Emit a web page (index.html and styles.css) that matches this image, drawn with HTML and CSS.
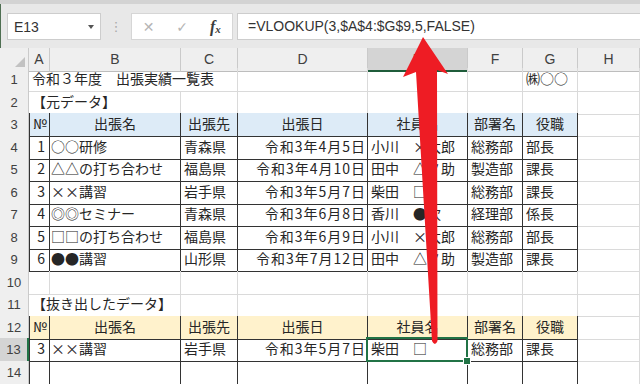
FILE: index.html
```html
<!DOCTYPE html>
<html lang="ja">
<head>
<meta charset="utf-8">
<link rel="stylesheet" href="styles.css">
</head>
<body>
<div class="app">
  <div class="top">
    <div class="namebox"><span class="nb-text">E13</span><span class="caret"></span></div>
    <div class="grip">⋮</div>
    <div class="btns">
      <span class="btn cancel">✕</span>
      <span class="btn enter">✓</span>
      <span class="btn fx"><i>f</i><i class="sub">x</i></span>
    </div>
    <div class="formula">=VLOOKUP(3,$A$4:$G$9,5,FALSE)</div>
  </div>

  <div class="sheet">
    <div class="row colhdr">
      <div class="corner"><svg width="10" height="10" viewBox="0 0 10 10"><polygon points="10,0 10,10 0,10" fill="#c2c2c2"/></svg></div>
      <div class="ch">A</div><div class="ch">B</div><div class="ch">C</div><div class="ch">D</div>
      <div class="ch selc">E</div><div class="ch">F</div><div class="ch">G</div><div class="ch">H</div>
    </div>

    <div class="row">
      <div class="rh">1</div>
      <div class="c span3">令和３年度　出張実績一覧表</div>
      <div class="c"></div><div class="c"></div><div class="c"></div>
      <div class="c">㈱○○</div><div class="c"></div>
    </div>

    <div class="row">
      <div class="rh">2</div>
      <div class="c span2 bb">【元データ】</div>
      <div class="c bb"></div><div class="c bb"></div><div class="c bb"></div><div class="c bb"></div><div class="c bb"></div>
      <div class="c"></div>
    </div>

    <div class="row">
      <div class="rh">3</div>
      <div class="c t a hb ctr">№</div>
      <div class="c t hb ctr">出張名</div>
      <div class="c t hb ctr">出張先</div>
      <div class="c t hb ctr">出張日</div>
      <div class="c t hb ctr">社員名</div>
      <div class="c t hb ctr">部署名</div>
      <div class="c t hb ctr">役職</div>
      <div class="c"></div>
    </div>

    <div class="row">
      <div class="rh">4</div>
      <div class="c t a num">1</div>
      <div class="c t b">○○研修</div>
      <div class="c t">青森県</div>
      <div class="c t date">令和3年4月5日</div>
      <div class="c t">小川　×太郎</div>
      <div class="c t">総務部</div>
      <div class="c t">部長</div>
      <div class="c"></div>
    </div>

    <div class="row">
      <div class="rh">5</div>
      <div class="c t a num">2</div>
      <div class="c t b">△△の打ち合わせ</div>
      <div class="c t">福島県</div>
      <div class="c t date">令和3年4月10日</div>
      <div class="c t">田中　△ノ助</div>
      <div class="c t">製造部</div>
      <div class="c t">課長</div>
      <div class="c"></div>
    </div>

    <div class="row">
      <div class="rh">6</div>
      <div class="c t a num">3</div>
      <div class="c t b">××講習</div>
      <div class="c t">岩手県</div>
      <div class="c t date">令和3年5月7日</div>
      <div class="c t">柴田　□</div>
      <div class="c t">総務部</div>
      <div class="c t">課長</div>
      <div class="c"></div>
    </div>

    <div class="row">
      <div class="rh">7</div>
      <div class="c t a num">4</div>
      <div class="c t b">◎◎セミナー</div>
      <div class="c t">青森県</div>
      <div class="c t date">令和3年6月8日</div>
      <div class="c t">香川　●次</div>
      <div class="c t">経理部</div>
      <div class="c t">係長</div>
      <div class="c"></div>
    </div>

    <div class="row">
      <div class="rh">8</div>
      <div class="c t a num">5</div>
      <div class="c t b">□□の打ち合わせ</div>
      <div class="c t">福島県</div>
      <div class="c t date">令和3年6月9日</div>
      <div class="c t">小川　×太郎</div>
      <div class="c t">総務部</div>
      <div class="c t">部長</div>
      <div class="c"></div>
    </div>

    <div class="row">
      <div class="rh">9</div>
      <div class="c t a num">6</div>
      <div class="c t b">●●講習</div>
      <div class="c t">山形県</div>
      <div class="c t date">令和3年7月12日</div>
      <div class="c t">田中　△ノ助</div>
      <div class="c t">製造部</div>
      <div class="c t">課長</div>
      <div class="c"></div>
    </div>

    <div class="row">
      <div class="rh">10</div>
      <div class="c"></div><div class="c"></div><div class="c"></div><div class="c"></div>
      <div class="c"></div><div class="c"></div><div class="c"></div><div class="c"></div>
    </div>

    <div class="row">
      <div class="rh">11</div>
      <div class="c span2 bb">【抜き出したデータ】</div>
      <div class="c bb"></div><div class="c bb"></div><div class="c bb"></div><div class="c bb"></div><div class="c bb"></div>
      <div class="c"></div>
    </div>

    <div class="row">
      <div class="rh">12</div>
      <div class="c t a hy ctr">№</div>
      <div class="c t hy ctr">出張名</div>
      <div class="c t hy ctr">出張先</div>
      <div class="c t hy ctr">出張日</div>
      <div class="c t hy ctr">社員名</div>
      <div class="c t hy ctr">部署名</div>
      <div class="c t hy ctr">役職</div>
      <div class="c"></div>
    </div>

    <div class="row">
      <div class="rh selr">13</div>
      <div class="c t a num">3</div>
      <div class="c t b">××講習</div>
      <div class="c t">岩手県</div>
      <div class="c t date">令和3年5月7日</div>
      <div class="c t sel">柴田　□</div>
      <div class="c t">総務部</div>
      <div class="c t">課長</div>
      <div class="c"></div>
    </div>

    <div class="row">
      <div class="rh">14</div>
      <div class="c t a"></div><div class="c t"></div><div class="c t"></div><div class="c t"></div>
      <div class="c t"></div><div class="c t"></div><div class="c t"></div><div class="c"></div>
    </div>
  </div>

  <svg class="arrow" width="640" height="384" viewBox="0 0 640 384">
    <path d="M423 37 L448 74 L437 70 L437.5 341 Q435 347 432 341 L416 72 L403 77 Z" fill="#ee1c24"/>
  </svg>
</div>
</body>
</html>
```

FILE: styles.css
```css
* {
  box-sizing: border-box;
  margin: 0;
  padding: 0;
}

body {
  margin: 0;
  background: #ffffff;
  font-family: "Noto Sans CJK JP", sans-serif;
}

.app {
  position: relative;
  width: 640px;
  height: 384px;
  overflow: hidden;
  background: #ffffff;
}

/* ---------- formula bar ---------- */
.top {
  height: 48px;
  background: #e8e8e8;
  border-top: 4px solid #d3d3d3;
  padding-top: 9px;
  display: flex;
  align-items: flex-start;
  box-shadow: inset 1px 0 0 #4f6f52;
}

.namebox {
  width: 94px;
  height: 27px;
  margin-left: 7px;
  background: #ffffff;
  border: 1px solid #cdcdcd;
  display: flex;
  align-items: center;
  justify-content: space-between;
  padding: 0 6px 0 6px;
}

.nb-text {
  font-family: "Liberation Sans", sans-serif;
  font-size: 14px;
  color: #333333;
}

.caret {
  width: 0;
  height: 0;
  border-left: 3.5px solid transparent;
  border-right: 3.5px solid transparent;
  border-top: 4px solid #555555;
}

.grip {
  width: 30px;
  height: 27px;
  text-align: center;
  line-height: 27px;
  font-family: "DejaVu Sans", sans-serif;
  font-size: 13px;
  color: #a8a8a8;
}

.btns {
  width: 102px;
  height: 27px;
  background: #ffffff;
  border: 1px solid #d6d6d6;
  display: flex;
}

.btn {
  width: 34px;
  height: 25px;
  display: flex;
  align-items: center;
  justify-content: center;
  color: #b5b5b5;
  font-family: "DejaVu Sans", sans-serif;
  font-size: 14px;
}

.btn.fx {
  color: #3c3c3c;
  font-family: "Liberation Serif", serif;
  font-size: 16px;
  font-weight: bold;
}

.btn.fx .sub {
  font-size: 11px;
  margin-top: 5px;
  margin-left: 0;
}

.formula {
  flex: 1;
  height: 27px;
  margin-left: 4px;
  background: #ffffff;
  border: 1px solid #cdcdcd;
  border-right: none;
  padding-left: 10px;
  font-family: "Liberation Sans", sans-serif;
  font-size: 14px;
  line-height: 25px;
  color: #333333;
  white-space: nowrap;
}

/* ---------- sheet ---------- */
.row {
  display: grid;
  grid-template-columns: 29px 21px 131px 57px 130px 100px 55px 55px 62px;
  height: 22.5px;
}

.row.colhdr {
  height: 20px;
}

.corner {
  background: #efefef;
  border-right: 1px solid #cacaca;
  border-bottom: 1px solid #cacaca;
  display: flex;
  align-items: flex-end;
  justify-content: flex-end;
  padding: 0 3px 4px 0;
}

.ch {
  background: #efefef;
  border-right: 1px solid #cacaca;
  border-bottom: 1px solid #bdbdbd;
  text-align: center;
  font-family: "Liberation Sans", sans-serif;
  font-size: 14px;
  line-height: 22px;
  color: #404040;
}

.ch.selc {
  background: #d4d4d4;
  border-bottom: 2px solid #1f5c3a;
}

.rh {
  background: #efefef;
  border-right: 1px solid #cacaca;
  border-bottom: 1px solid #d6d6d6;
  text-align: center;
  font-family: "Liberation Sans", sans-serif;
  font-size: 13px;
  line-height: 23px;
  color: #404040;
}

.rh.selr {
  background: #d4d4d4;
  border-right: 2px solid #217346;
}

.c {
  border-right: 1px solid #dadada;
  border-bottom: 1px solid #dadada;
  padding: 0 3px;
  font-size: 14px;
  line-height: 21px;
  color: #262626;
  white-space: nowrap;
}

.span2 {
  grid-column: span 2;
}

.span3 {
  grid-column: span 3;
}

.bb {
  border-bottom-color: #333333;
}

.t {
  border-right-color: #333333;
  border-bottom-color: #333333;
}

.t.a {
  border-left: 1px solid #333333;
}

.t.b {
  padding-left: 1px;
}

.hb {
  background: #ddebf7;
}

.hy {
  background: #fff2cc;
}

.ctr {
  text-align: center;
}

.num {
  text-align: right;
  padding-right: 4px;
}

.date {
  text-align: right;
  padding-right: 1px;
  letter-spacing: 1px;
}

.sel {
  position: relative;
}

.sel::after {
  content: "";
  position: absolute;
  left: -2px;
  top: -1px;
  right: -1px;
  bottom: -1px;
  border: 2px solid #217346;
}

.sel::before {
  content: "";
  position: absolute;
  right: -4px;
  bottom: -4px;
  width: 6px;
  height: 6px;
  background: #217346;
  border: 1px solid #ffffff;
  z-index: 2;
}

/* ---------- annotation arrow ---------- */
.arrow {
  position: absolute;
  left: 0;
  top: 0;
  pointer-events: none;
}
```
